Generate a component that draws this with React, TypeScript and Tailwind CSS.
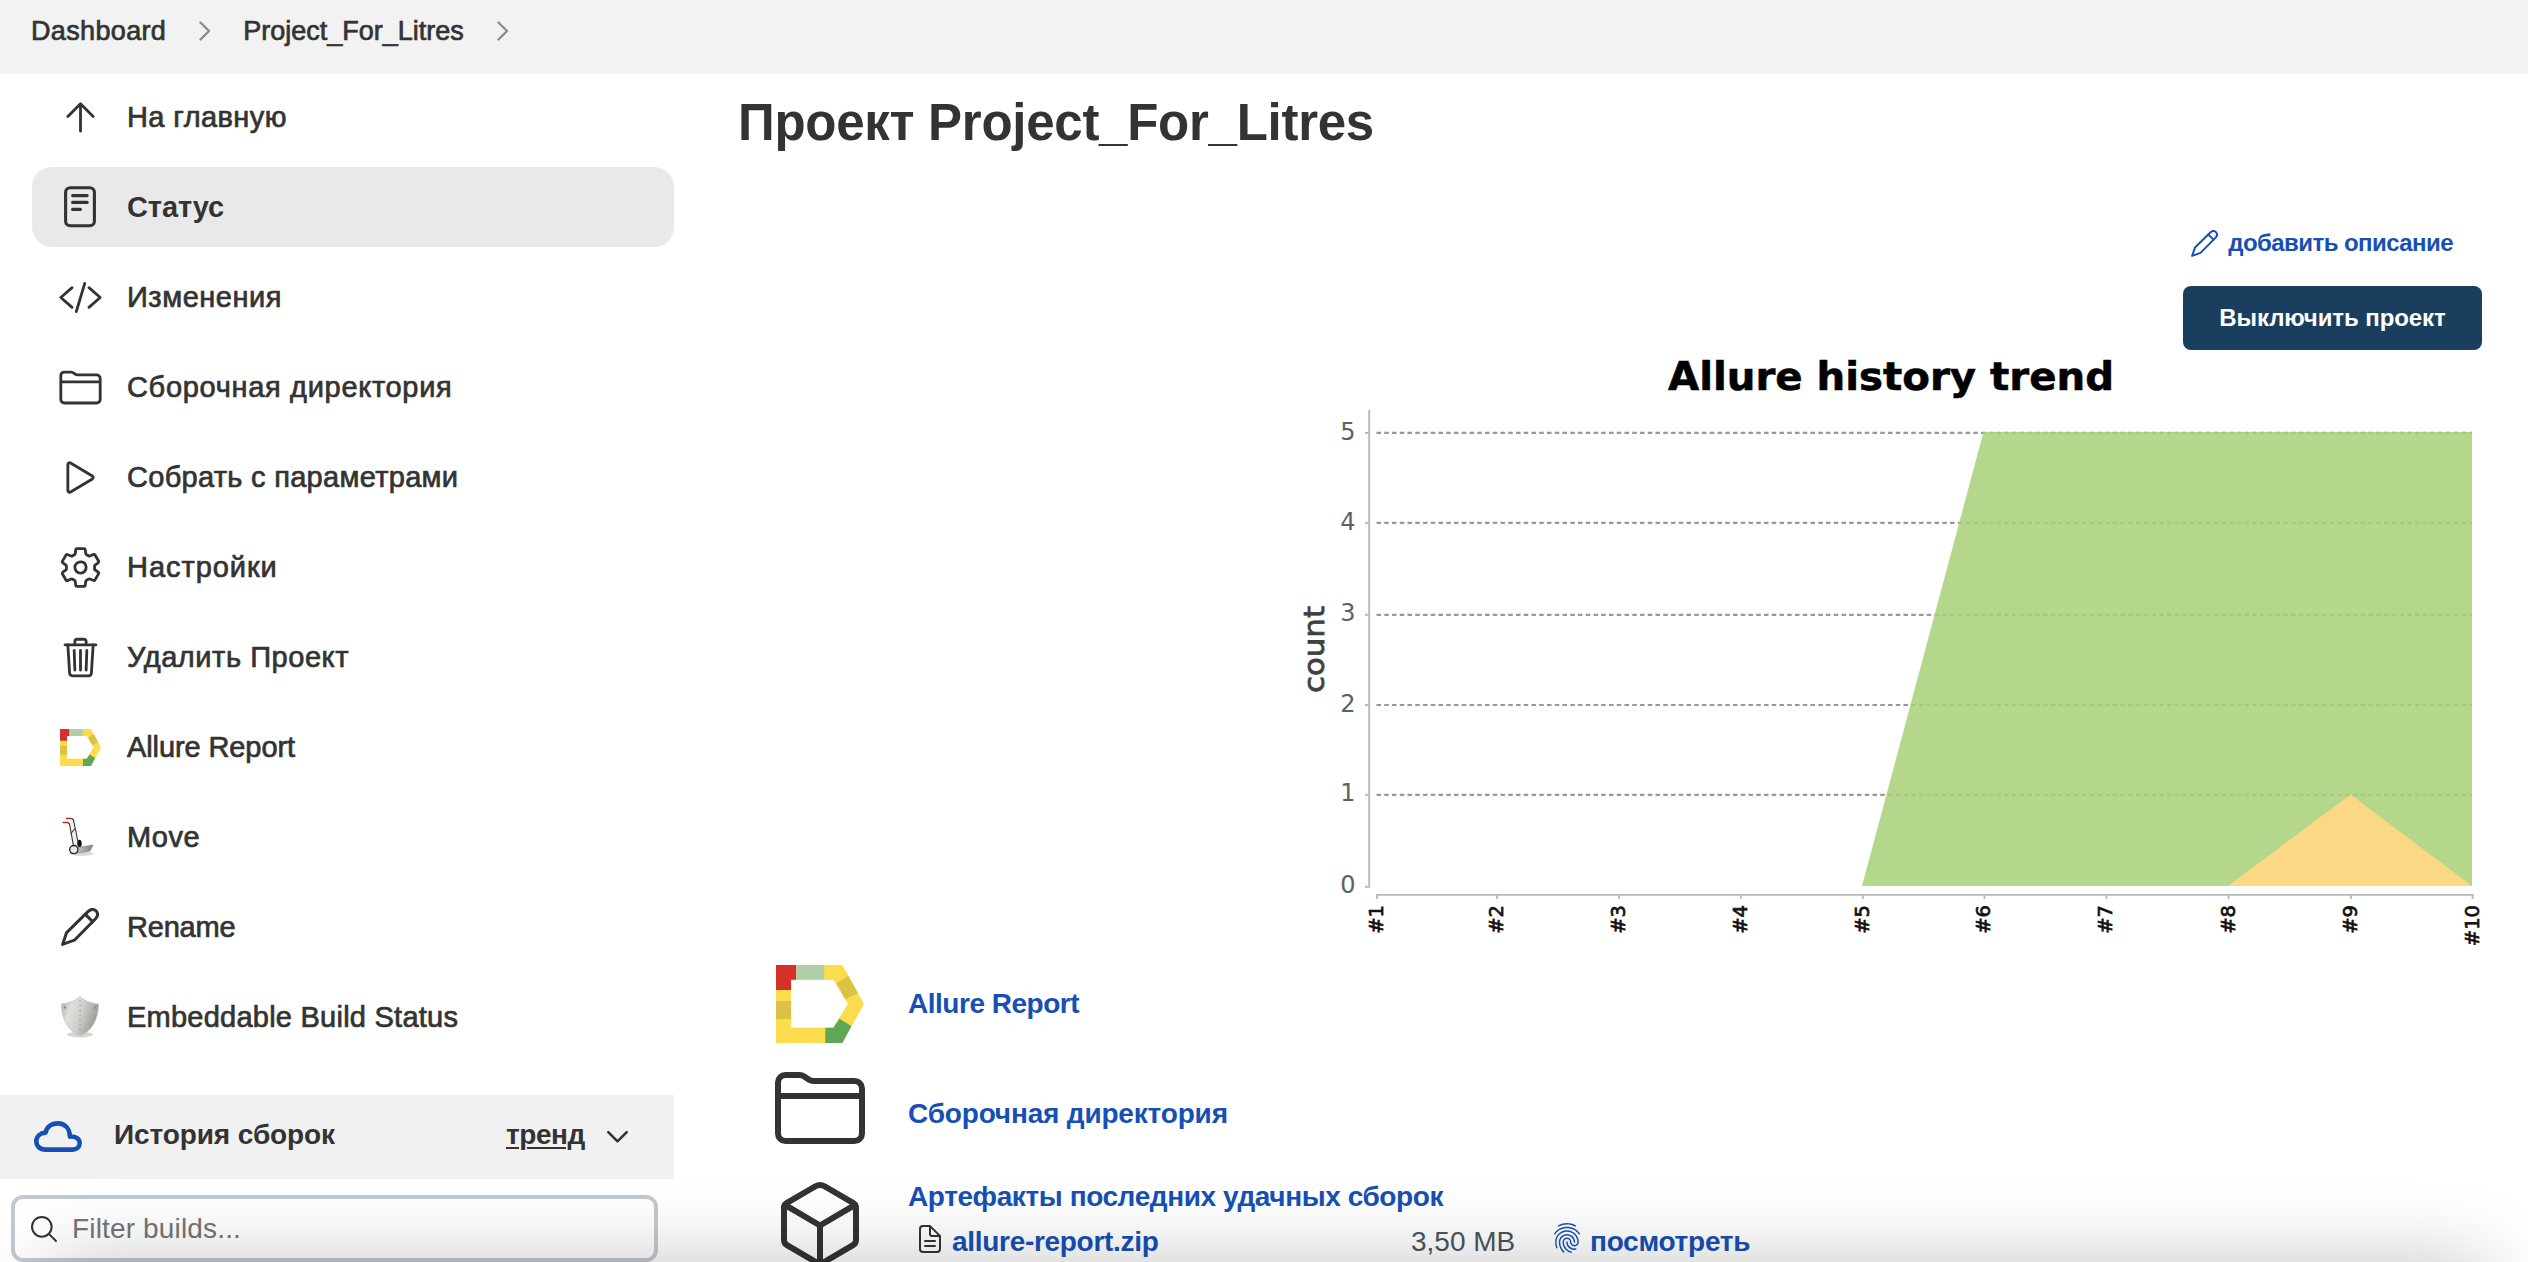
import type { ReactNode } from "react";
import {
  IoArrowUpOutline,
  IoCodeSlashOutline,
  IoCubeOutline,
  IoDocumentTextOutline,
  IoFingerPrintOutline,
  IoFolderOutline,
  IoPlayOutline,
  IoSearchOutline,
  IoSettingsOutline,
  IoTrashOutline,
} from "react-icons/io5";

function AllureLogo({ className }: { className: string }) {
  return (
    <svg viewBox="0 0 87.5 78" preserveAspectRatio="none" className={className}>
      <path fillRule="evenodd" fill="#fcdc4c" d="M0 0H66L87.5 39 66 78H0ZM15 14.7V62.7H57L71.5 38.7 57 14.7Z" />
      <path fill="#d43128" d="M0 0H20V14.7H15V25H0Z" />
      <path fill="#aecfa8" d="M20 0H48V14.7H20Z" />
      <path fill="#dbc244" d="M60.2 18.5 71.8 10.8 81.6 28.2 69 34.5ZM0 36H15V54H0Z" />
      <path fill="#5ea755" d="M49 62.7H57L63 53.7 75 61 66 78H49Z" />
    </svg>
  );
}

function Pencil({ className, stroke }: { className: string; stroke: number }) {
  return (
    <svg viewBox="0 0 38 38" fill="none" stroke="currentColor" strokeWidth={stroke} strokeLinejoin="round" strokeLinecap="round" className={className}>
      <path d="M1.6 36.4 5.6 24.6 27.2 3.4Q31.6 -.4 35.2 3 38.4 6.8 34.6 10.8L13.4 32.2Z" />
      <path d="M24.4 6.4 31.6 13.6" />
    </svg>
  );
}

function StatusIcon() {
  return (
    <svg viewBox="0 0 32 42" fill="none" stroke="currentColor" strokeWidth="3.1" strokeLinecap="round" className="h-[42px] w-8">
      <rect x="1.6" y="1.8" width="28.8" height="38" rx="4.5" />
      <path d="M8.6 9.6H23.2M8.6 16.4H23.2M8.6 23.4H16.4" />
    </svg>
  );
}

function HandTruck() {
  return (
    <svg viewBox="0 0 40 42" fill="none" className="h-[42px] w-10">
      <defs>
        <linearGradient id="plate" x1="0" y1="0" x2="1" y2="0">
          <stop offset="0" stopColor="#c9ccc8" />
          <stop offset="1" stopColor="#7f827e" />
        </linearGradient>
      </defs>
      <ellipse cx="21" cy="37.500" rx="12" ry="2.500" fill="#000" opacity=".15" />
      <path d="M9.500 7 13.500 31 19.500 30 13 3.500Z" fill="#eff0ee" />
      <path d="M8 6.500 9.500 8 13.500 30M12 2.500 13.500 4 18 26M10.500 18 15 12.500" stroke="#333" strokeWidth="1.100" />
      <path d="M2.500 6.500H8.500M6 2.500H12" stroke="#b5342a" strokeWidth="1.700" />
      <ellipse cx="19.500" cy="27.500" rx="2.200" ry="3.800" fill="#111" />
      <path d="M15 31 21 31 33 29 30 35 17 37Z" fill="url(#plate)" stroke="#777" strokeWidth=".6" />
      <circle cx="13.800" cy="33.600" r="4.100" fill="#e9ebe7" stroke="#222" strokeWidth="1.300" />
    </svg>
  );
}

function Shield() {
  return (
    <svg viewBox="0 0 40 44" fill="none" className="h-11 w-10">
      <defs>
        <linearGradient id="steel" x1="0" y1="0" x2="1" y2=".35">
          <stop offset="0" stopColor="#a5a7a1" />
          <stop offset=".3" stopColor="#dfe0dc" />
          <stop offset=".6" stopColor="#cfd0cb" />
          <stop offset="1" stopColor="#9c9e99" />
        </linearGradient>
      </defs>
      <ellipse cx="20" cy="39.500" rx="13" ry="3" fill="#000" opacity=".16" />
      <path d="M20 1.500C16.500 5.500 8 8.500 1.500 9C1.500 24 8 36 20 41C32 36 38.500 24 38.500 9C32 8.500 23.500 5.500 20 1.500Z" fill="url(#steel)" stroke="#c3c5c0" strokeWidth=".8" />
      <path d="M20 5V38" stroke="#a2a49f" strokeWidth="1.400" strokeDasharray="1.400 3.400" />
      <path d="M4 12.500H6M34 12.500H36" stroke="#858782" strokeWidth="2" />
    </svg>
  );
}

function Cloud() {
  return (
    <svg viewBox="0 0 48 32" fill="none" stroke="#1650b5" strokeWidth="4.6" strokeLinejoin="round" className="h-8 w-12">
      <path d="M11.500 28.600C6 28.600 2.300 25 2.300 20.200 2.300 15.600 6 12 11.600 11.600 12.800 6 17.400 2.400 23.800 2.400 31 2.400 35.600 7.600 36 15.600 41.800 15.200 45.700 17.800 45.700 22 45.700 26 42.600 28.600 38.400 28.600Z" />
    </svg>
  );
}

function Chevron({ className }: { className: string }) {
  return (
    <svg viewBox="0 0 12 20" fill="none" stroke="currentColor" strokeWidth="2.400" strokeLinecap="round" strokeLinejoin="round" className={className}>
      <path d="M1.500 1.500 10 10 1.500 18.500" />
    </svg>
  );
}

type Item = { label: string; track: string; icon: ReactNode; active?: boolean };

const menu: Item[] = [
  { label: "На главную", track: "tracking-[0.4px]", icon: <IoArrowUpOutline className="size-[45px] [&_path]:[stroke-width:32px]" /> },
  { label: "Статус", track: "tracking-[-0.1px]", icon: <StatusIcon />, active: true },
  { label: "Изменения", track: "tracking-[0.53px]", icon: <IoCodeSlashOutline className="size-[45px]" /> },
  { label: "Сборочная директория", track: "tracking-[0.68px]", icon: <IoFolderOutline className="size-[45px]" /> },
  { label: "Собрать с параметрами", track: "tracking-[0.29px]", icon: <IoPlayOutline className="size-[45px]" /> },
  { label: "Настройки", track: "tracking-[0.95px]", icon: <IoSettingsOutline className="size-[45px]" /> },
  { label: "Удалить Проект", track: "tracking-[0.55px]", icon: <IoTrashOutline className="size-[45px]" /> },
  { label: "Allure Report", track: "tracking-[-0.1px]", icon: <AllureLogo className="h-[37px] w-[41px]" /> },
  { label: "Move", track: "tracking-[0.6px]", icon: <HandTruck /> },
  { label: "Rename", track: "tracking-[-0.2px]", icon: <Pencil stroke={3} className="size-[38px]" /> },
  { label: "Embeddable Build Status", track: "tracking-[0.24px]", icon: <Shield /> },
];

function Sidebar() {
  return (
    <aside className="w-[674px] shrink-0">
      <nav className="flex flex-col gap-2.5 pt-[3px] pl-8">
        {menu.map((m) => (
          <a key={m.label} className={`flex h-20 items-center rounded-[20px] ${m.active ? "bg-[#e9e9e9]" : ""}`}>
            <span className="ml-6 flex w-12 justify-center">{m.icon}</span>
            <span
              className={`ml-[23px] text-[29px] leading-[80px] ${m.track} ${m.active ? "font-bold" : "[-webkit-text-stroke:0.7px_#333]"}`}
            >
              {m.label}
            </span>
          </a>
        ))}
      </nav>

      <div className="mt-[38px] flex h-[84px] items-center bg-[#f1f1f1] pr-[50px] pl-[34px]">
        <Cloud />
        <span className="ml-8 -mt-1 text-[28px] font-bold tracking-[-0.1px]">История сборок</span>
        <a className="-mt-1 ml-auto text-[28px] font-bold tracking-[-0.4px] underline decoration-2 underline-offset-3">тренд</a>
        <Chevron className="ml-[26px] h-[22px] w-[13px] rotate-90" />
      </div>

      <label className="mt-4 ml-[11px] flex h-[67px] w-[647px] items-center rounded-xl border-4 border-[#c3cacf] bg-white pl-[13px]">
        <IoSearchOutline className="mt-px size-[32px]" />
        <input
          placeholder="Filter builds..."
          className="mt-px ml-3 h-full flex-1 bg-transparent text-[28px] tracking-[0.16px] outline-none placeholder:text-[#757575]"
        />
      </label>
    </aside>
  );
}

const gridRows = [
  { label: "5", y: 432.9 },
  { label: "4", y: 522.9 },
  { label: "3", y: 614.8 },
  { label: "2", y: 705 },
  { label: "1", y: 794.8 },
  { label: "0", y: 886.8 },
];
const builds = [1376.9, 1496.9, 1618.9, 1740.8, 1862.8, 1984.5, 2106.4, 2228.6, 2351, 2472.6];

function TrendChart() {
  return (
    <svg viewBox="1290 350 1200 606" className="-mr-2 h-[606px] w-[1200px] self-end [font-family:'DejaVu_Sans',sans-serif]">
      <text x="1668" y="389.800" fontSize="39.500" fontWeight="700" fill="#000" stroke="#000" strokeWidth=".6" textLength="446" lengthAdjust="spacingAndGlyphs">
        Allure history trend
      </text>
      <text transform="translate(1324.300 693) rotate(-90)" fontSize="29" fill="#404040" stroke="#404040" strokeWidth=".8" textLength="87" lengthAdjust="spacingAndGlyphs">
        count
      </text>
      <g stroke="#989898" strokeWidth="2.200" strokeDasharray="4.500 3.250">
        {gridRows.slice(0, 5).map((r) => (
          <path key={r.label} d={`M1376.500 ${r.y}H2472`} />
        ))}
      </g>
      <g fill="#606060" fontSize="24" textAnchor="end">
        {gridRows.map((r) => (
          <text key={r.label} x="1355.500" y={r.y + 6.6}>
            {r.label}
          </text>
        ))}
      </g>
      <path fill="#aad17b" fillOpacity=".87" d="M1862 886 1983.500 432H2472V886Z" />
      <path fill="#fbd883" d="M2228 886 2350.500 794.500 2472 886Z" />
      <g stroke="#b9b9b9" strokeWidth="1.900" fill="none">
        <path d="M1369.200 410V887.500M1376 894.900H2473.500" />
        {gridRows.map((r) => (
          <path key={r.label} d={`M1365 ${r.y}H1369`} />
        ))}
        {builds.map((x) => (
          <path key={x} d={`M${x} 895V899`} />
        ))}
      </g>
      <g fill="#111" stroke="#111" strokeWidth=".7" fontSize="19.500" textAnchor="end">
        {builds.map((x, i) => (
          <text key={x} transform={`translate(${x + 5.9} 905) rotate(-90)`}>
            #{i + 1}
          </text>
        ))}
      </g>
    </svg>
  );
}

function Main() {
  return (
    <main className="flex min-w-0 flex-1 flex-col pr-[46px]">
      <h1 className="mt-[17px] ml-16 h-16 text-[51px] leading-[64px] font-bold tracking-[-0.27px]">Проект Project_For_Litres</h1>

      <div className="mt-[57px] flex flex-col items-end">
        <a className="mr-[29px] flex h-[62px] items-center text-[24px] font-bold tracking-[-0.56px] text-[#1650b5]">
          <Pencil stroke={2.8} className="mr-2.5 size-[27px]" />
          добавить описание
        </a>
        <button className="mt-3 h-16 w-[299px] rounded-lg bg-[#1a3f5e] text-[24px] font-bold tracking-[-0.08px] text-white">
          Выключить проект
        </button>
      </div>

      <TrendChart />

      <div className="ml-[98px] flex flex-col text-[28px] font-bold text-[#1650b5]">
        <div className="flex h-24 items-center">
          <span className="flex w-24 justify-center">
            <AllureLogo className="h-[78px] w-[88px]" />
          </span>
          <a className="ml-10 tracking-[-0.48px]">Allure Report</a>
        </div>
        <div className="mt-2 flex h-24 items-center">
          <IoFolderOutline className="size-24 text-[#333]" />
          <a className="mt-3 ml-10 tracking-[-0.18px]">Сборочная директория</a>
        </div>
        <div className="mt-5 flex">
          <IoCubeOutline className="size-24 shrink-0 text-[#333]" />
          <div className="ml-10 flex flex-col">
            <a className="h-[42px] leading-[41px] tracking-[-0.41px]">Артефакты последних удачных сборок</a>
            <div className="flex h-12 items-center">
              <IoDocumentTextOutline className="-mt-1.5 ml-1.5 size-8 text-[#333]" />
              <a className="ml-1.5 w-[459px] tracking-[-0.3px]">allure-report.zip</a>
              <span className="w-[140px] font-normal text-[#4d545d]">3,50 MB</span>
              <IoFingerPrintOutline className="-mt-2 size-8" />
              <a className="ml-[7px] tracking-[-0.27px]">посмотреть</a>
            </div>
          </div>
        </div>
      </div>
    </main>
  );
}

export default function App() {
  return (
    <div className="relative flex h-[1262px] w-[2528px] flex-col overflow-hidden bg-white text-[#333] [font-family:'Liberation_Sans',Arial,sans-serif]">
      <header className="flex h-[74px] shrink-0 bg-[#f2f2f2] pl-[31px] text-[27px] leading-[62px] [-webkit-text-stroke:0.7px_#333]">
        <a className="tracking-[0.35px]">Dashboard</a>
        <Chevron className="mt-[21px] ml-[33px] h-5 w-3 text-[#8c8c8c]" />
        <a className="ml-8">Project_For_Litres</a>
        <Chevron className="mt-[21px] ml-[33px] h-5 w-3 text-[#8c8c8c]" />
      </header>
      <div className="flex flex-1">
        <Sidebar />
        <Main />
      </div>
      <div className="pointer-events-none absolute top-full right-10 left-12 h-40 shadow-[0_0_80px_rgba(0,0,0,0.23)]" />
    </div>
  );
}
